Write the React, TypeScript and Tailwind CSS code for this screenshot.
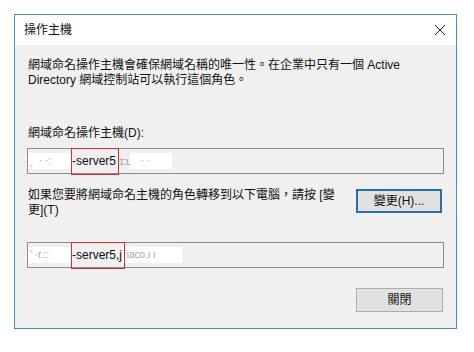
import React from 'react';

const font = 'font-["Liberation_Sans","Noto_Sans_CJK_TC",sans-serif]';

function Blob({ width, marks }: { width: number; marks: string }) {
  return (
    <span
      className="inline-block h-[16px] whitespace-pre bg-white pl-[2px] text-[10px] leading-[16px] text-[#a8a8a8]"
      style={{ width }}
    >
      {marks}
    </span>
  );
}

function ServerField({ left, right, boxWidth }: { left: string; right: React.ReactNode; boxWidth: number }) {
  return (
    <div className="relative flex h-[26px] items-center border border-[#8c8c8c] bg-[#f0f0f0] text-[12px] text-[#111]">
      <Blob width={43} marks={left} />
      <span className="ml-[1px]">-server5</span>
      {right}
      <div
        className="absolute top-[-1px] left-[43px] h-[27px] border border-[#d2302f]"
        style={{ width: boxWidth }}
      />
    </div>
  );
}

export default function App() {
  return (
    <div className={`h-[352px] w-[474px] bg-white pl-[14px] pt-[14px] ${font}`}>
      <div className="flex h-[315px] w-[443px] flex-col border border-[#4b8bbd]">
        <div className="flex h-[30px] items-center justify-between bg-white pl-[9px] pr-[9px]">
          <span className="text-[12px] text-[#111]">操作主機</span>
          <svg width="12" height="12" viewBox="0 0 12 12" className="mr-[1px]">
            <path d="M1 1 L11 11 M11 1 L1 11" stroke="#222" strokeWidth="1" />
          </svg>
        </div>

        <div className="flex flex-1 flex-col bg-[#f0f0f0] px-[12px] text-[12px] text-[#111]">
          <p className="mt-[13px] pl-[1px] leading-[15px]">
            網域命名操作主機會確保網域名稱的唯一性。在企業中只有一個 Active Directory 網域控制站可以執行這個角色。
          </p>

          <div className="mt-[37px] pl-[1px] leading-[16px]">網域命名操作主機(D):</div>

          <div className="mt-[7px]">
            <ServerField
              left={"˛  · ·:"}
              boxWidth={48}
              right={
                <>
                  <span className="ml-[4px] text-[10px] text-[#9a9a9a]">ɪ:ʟ</span>
                  <Blob width={42} marks={"   · ·"} />
                </>
              }
            />
          </div>

          <div className="mt-[14px] flex items-start justify-between">
            <p className="w-[312px] pl-[1px] leading-[15px]">
              如果您要將網域命名主機的角色轉移到以下電腦，請按 [變更](T)
            </p>
            <button className="mr-[2px] mt-[1px] h-[24px] w-[86px] border-2 border-[#2b6fa8] bg-[#e1e1e1] text-[12px] text-[#111]">
              變更(H)...
            </button>
          </div>

          <div className="mt-[24px]">
            <ServerField
              left={"' ·r.::"}
              boxWidth={54}
              right={
                <>
                  <span>,j</span>
                  <Blob width={60} marks={" ιaco.ι ι"} />
                </>
              }
            />
          </div>

          <div className="mt-[20px] flex justify-end">
            <button className="mr-[1px] h-[24px] w-[87px] border border-[#adadad] bg-[#e1e1e1] text-[12px] text-[#111]">
              關閉
            </button>
          </div>
        </div>
      </div>
    </div>
  );
}
